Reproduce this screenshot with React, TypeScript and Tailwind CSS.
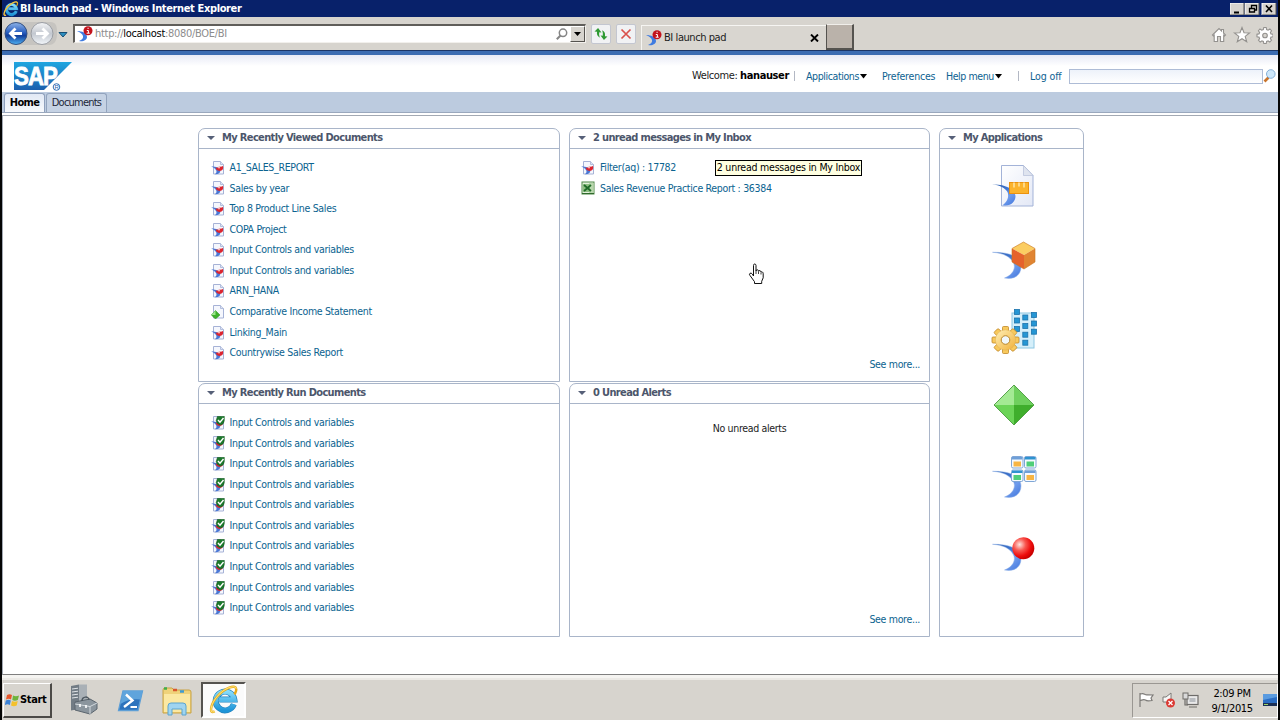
import React from 'react';
import { clsx } from 'clsx';

type DocKind = 'webi' | 'crystal' | 'excel' | 'done';

interface Doc {
  name: string;
  kind: DocKind;
}

const viewedDocs: Doc[] = [
  { name: 'A1_SALES_REPORT', kind: 'webi' },
  { name: 'Sales by year', kind: 'webi' },
  { name: 'Top 8 Product Line Sales', kind: 'webi' },
  { name: 'COPA Project', kind: 'webi' },
  { name: 'Input Controls and variables', kind: 'webi' },
  { name: 'Input Controls and variables', kind: 'webi' },
  { name: 'ARN_HANA', kind: 'webi' },
  { name: 'Comparative Income Statement', kind: 'crystal' },
  { name: 'Linking_Main', kind: 'webi' },
  { name: 'Countrywise Sales Report', kind: 'webi' },
];

const runDocs: Doc[] = Array.from({ length: 10 }, () => ({
  name: 'Input Controls and variables',
  kind: 'done',
}));

const inboxDocs: Doc[] = [
  { name: 'Filter(aq) : 17782', kind: 'webi' },
  { name: 'Sales Revenue Practice Report : 36384', kind: 'excel' },
];

const Gradients = () => (
  <svg className="absolute" width="0" height="0">
    <defs>
      <linearGradient id="swoosh" x1="0" y1="0" x2="1" y2="1">
        <stop offset="0" stopColor="#2457a8" />
        <stop offset="0.4" stopColor="#3f74cf" />
        <stop offset="0.65" stopColor="#6f9cec" />
        <stop offset="1" stopColor="#3f74dc" />
      </linearGradient>
      <radialGradient id="ball" cx="0.33" cy="0.33" r="0.7">
        <stop offset="0" stopColor="#ffe3de" />
        <stop offset="0.4" stopColor="#f8564f" />
        <stop offset="0.75" stopColor="#ee0c0c" />
        <stop offset="1" stopColor="#c80000" />
      </radialGradient>
      <linearGradient id="gold" x1="0" y1="0" x2="1" y2="1">
        <stop offset="0" stopColor="#fff0b8" />
        <stop offset="1" stopColor="#f0b038" />
      </linearGradient>
      <linearGradient id="page" x1="0" y1="0" x2="1" y2="1">
        <stop offset="0" stopColor="#ffffff" />
        <stop offset="1" stopColor="#e3e8f6" />
      </linearGradient>
      <linearGradient id="sap" x1="0" y1="0" x2="0" y2="1">
        <stop offset="0" stopColor="#1fa6e0" />
        <stop offset="1" stopColor="#1b5fae" />
      </linearGradient>
      <linearGradient id="blueBtn" x1="0" y1="0" x2="0" y2="1">
        <stop offset="0" stopColor="#8fb4e8" />
        <stop offset="0.45" stopColor="#2a5fc0" />
        <stop offset="0.6" stopColor="#123f9c" />
        <stop offset="1" stopColor="#4fb2f4" />
      </linearGradient>
      <linearGradient id="greyBtn" x1="0" y1="0" x2="0" y2="1">
        <stop offset="0" stopColor="#f4f5f7" />
        <stop offset="0.5" stopColor="#c3c8d0" />
        <stop offset="1" stopColor="#f2f6fa" />
      </linearGradient>
      <linearGradient id="ie" x1="0" y1="0" x2="0" y2="1">
        <stop offset="0" stopColor="#86dcfb" />
        <stop offset="1" stopColor="#1e95d8" />
      </linearGradient>
    </defs>
  </svg>
);

const IeIcon = ({ className }: { className?: string }) => (
  <svg className={className} viewBox="0 0 32 32" fill="none">
    <path d="M26.5 20.5A10 10 0 1 1 27 15.5H11" stroke="#2483bd" strokeWidth="6.4" />
    <path d="M26.5 20.5A10 10 0 1 1 27 15.5H11" stroke="url(#ie)" strokeWidth="5" />
    <path d="M6 28C0 32 1 21 9 12 17 3 28-1 29 4c.4 1.6-.6 4-1.8 6" stroke="#e5a91b" strokeWidth="2.6" />
    <path d="M6 28C0 32 1 21 9 12 17 3 28-1 29 4" stroke="#ffe272" strokeWidth="1.2" />
  </svg>
);

const BiIcon = () => (
  <svg className="shrink-0" width="16" height="16" viewBox="0 0 16 16">
    <path d="M0 5C5 5 10 7 10 11c0 3-4 5-8 4 3-1 4.500-3 4-5C5.500 8 3 6 0 5z" fill="#3f7be0" />
    <circle cx="11" cy="4.700" r="4.500" fill="#c3121b" />
    <path d="M9.800 4.500h1.600V7M9.700 7.200h3M10.500 2.300h1.200" stroke="#fff" strokeWidth="1" fill="none" />
  </svg>
);

const DocIcon = ({ kind }: { kind: DocKind }) => {
  if (kind === 'excel') {
    return (
      <svg className="shrink-0" width="14" height="14" viewBox="0 0 14 14">
        <rect x="1" y="1" width="12" height="12" fill="#e3f0dc" stroke="#4f8746" />
        <path d="M8 2h4.500v10H8z" fill="#b8d7ac" />
        <path d="M2 3h7v8H2z" fill="#8fbf83" />
        <path d="M3 4l7 6M10 4l-7 6" stroke="#1f6a28" strokeWidth="1.800" />
        <path d="M1 12.500h12" stroke="#2f6a2c" />
      </svg>
    );
  }
  return (
    <svg className="shrink-0" width="14" height="14" viewBox="0 0 14 14">
      <path d="M2.500.5h7l3 3v9.500h-10z" fill="#f5f7fd" stroke="#a6b2d6" />
      <path d="M9.500.5v3h3" fill="#dde3f3" stroke="#a6b2d6" strokeWidth=".8" />
      {kind === 'crystal' ? (
        <g>
          <path d="M4.500 5.500L9 10l-4.500 4L.3 10z" fill="#3db12b" stroke="#2a8a1e" strokeWidth=".5" />
          <path d="M4.500 5.500V10H.3z" fill="#9be58c" />
        </g>
      ) : (
        <g>
          <path d="M.2 5.300C5 5.500 9.500 7 9.300 10c0 2-2 3.500-5.300 3.300C5.500 12 6 10.500 5 9 4 7.500 2.500 6.500.2 5.300z" fill="#4a78d6" />
          <path d="M4.500 6.500Q5 9 7.500 9.800q3 .5 4.200-1.200.8-1.600.3-3.600-2 1-3 .5-2 1.500-4.500 1z" fill="#dc2530" />
          <circle cx="8" cy="6.500" r="1.100" fill="#f9b5b0" />
        </g>
      )}
      {kind === 'done' && (
        <g>
          <path d="M6.500.2h6.800v4q0 4-3.800 4.800Q5.500 8 5.200 4.500z" fill="#1c7a2c" stroke="#14501e" strokeWidth=".5" />
          <path d="M7 4l2 2.200L12.500 2" stroke="#fff" strokeWidth="1.400" fill="none" />
        </g>
      )}
    </svg>
  );
};

const DocRow = ({ doc }: { doc: Doc }) => (
  <li className="flex h-[20.6px] items-center gap-[5px]">
    <DocIcon kind={doc.kind} />
    <a className="text-[#0b6390]">{doc.name}</a>
  </li>
);

interface PanelProps {
  title: string;
  className?: string;
  children?: React.ReactNode;
}

const Panel: React.FC<PanelProps> = ({ title, className, children }) => (
  <section className={clsx('flex flex-col rounded-t-[7px] border border-[#a9b5c9] bg-white', className)}>
    <h2 className="flex h-[19.5px] shrink-0 items-center gap-[7px] border-b border-[#a9b5c9] pl-2 text-[11px] font-bold tracking-[-0.64px] text-[#4c566b]">
      <svg width="8" height="4" viewBox="0 0 8 4">
        <path d="M0 0h8L4 4z" fill="#566078" />
      </svg>
      {title}
    </h2>
    {children}
  </section>
);

const Swoosh = () => (
  <path
    d="M2.500 17.300C13 18 20 21.500 23 27 27 33 22 40.500 14.500 43c9 2 16.500-2.500 16.500-11C31 22 20 17 2.500 17.300z"
    fill="url(#swoosh)"
    stroke="#8fb0e6"
    strokeWidth=".5"
  />
);

const AppIcon = ({ children }: { children: React.ReactNode }) => (
  <svg className="mb-[25px] block" width="48" height="48" viewBox="0 0 48 48">
    {children}
  </svg>
);

const gridSquares = [
  [27, 4], [27, 12.5], [27, 21],
  [35.3, 9.5], [35.3, 18], [35.3, 26.7], [35.3, 34.7],
  [44, 7], [44, 15.5], [44, 23.7],
];

const tiles = [
  { x: 21.5, y: 2.5, bar: '#6f9fd8', fill: '#f7b544' },
  { x: 34.5, y: 2.5, bar: '#2f93d0', fill: '#4fce79' },
  { x: 21.5, y: 16, bar: '#2f93d0', fill: '#4fce79' },
  { x: 34.5, y: 16, bar: '#6f9fd8', fill: '#f7b544' },
];

const Applications = () => (
  <div className="flex flex-col items-center pt-[13.5px] pl-[5px]">
    <AppIcon>
      <path d="M11.500 3.500h22l9.500 10v30.500H11.500z" fill="url(#page)" stroke="#a3b3d8" />
      <path d="M33.500 3.500v10H43z" fill="#dfe4ef" stroke="#b4bfd8" strokeWidth=".7" />
      <path d="M2 22.500C10 23 15 26 17.500 30c2 5-.5 10-5 13.200C20 45 25.500 40 25.500 34 25 27 15 22 2 22.500z" fill="url(#swoosh)" />
      <rect x="19.500" y="20.500" width="19" height="11" fill="#fbb32d" stroke="#eb920f" />
      <path d="M24 20.500v5M29 20.500v4M34 20.500v5" stroke="#fff0c4" strokeWidth="1.200" />
    </AppIcon>
    <AppIcon>
      <Swoosh />
      <path d="M33.500 7L45 13.500 34 20l-12-6.500z" fill="#fbcd62" />
      <path d="M22 13.500L34 20v14l-12-7z" fill="#e5622c" />
      <path d="M45 13.500L34 20v14l11-7z" fill="#e08432" />
      <path d="M33.500 7L45 13.500V27l-11 7-12-7V13.500z" fill="none" stroke="#c8751f" strokeWidth=".6" />
    </AppIcon>
    <AppIcon>
      <rect x="22" y="5" width="22" height="35" fill="#d5effa" stroke="#8cc6e2" />
      {gridSquares.map(([x, y]) => (
        <rect key={`${x}-${y}`} x={x - 2.5} y={y - 2.5} width="5" height="5" fill="#2596d4" stroke="#1c73ac" strokeWidth=".8" />
      ))}
      {[0, 45, 90, 135].map((angle) => (
        <rect
          key={angle}
          x="12.500"
          y="18.500"
          width="6"
          height="27"
          rx="1"
          fill="#f8c95c"
          stroke="#c0882a"
          strokeWidth=".8"
          transform={`rotate(${angle} 15.5 32)`}
        />
      ))}
      <circle cx="15.500" cy="32" r="10.200" fill="url(#gold)" stroke="#dcae50" strokeWidth=".5" />
      <circle cx="15.500" cy="32" r="4.300" fill="#f1f8fb" stroke="#b9872d" />
    </AppIcon>
    <AppIcon>
      <path d="M24 4v20H4z" fill="#a4ea94" />
      <path d="M24 4l20 20H24z" fill="#6fd05e" />
      <path d="M4 24h20v20z" fill="#6bd457" />
      <path d="M44 24H24v20z" fill="#3fae2c" />
      <path d="M24 4l20 20-20 20L4 24z" fill="none" stroke="#4b9a40" strokeWidth=".9" />
    </AppIcon>
    <AppIcon>
      <Swoosh />
      {tiles.map((tile) => (
        <g key={`${tile.x}-${tile.y}`}>
          <rect x={tile.x} y={tile.y} width="11.500" height="11.500" rx="1.500" fill="#f6faff" stroke="#7fa6d6" />
          <rect x={tile.x + 0.5} y={tile.y + 0.5} width="10.500" height="2.500" fill={tile.bar} />
          <rect x={tile.x + 2} y={tile.y + 5} width="7.500" height="5" fill={tile.fill} />
        </g>
      ))}
    </AppIcon>
    <AppIcon>
      <Swoosh />
      <circle cx="33.300" cy="21.300" r="11" fill="url(#ball)" />
    </AppIcon>
  </div>
);

const TitleBar = () => (
  <header className="flex h-[17px] items-center bg-[#08216a] pl-[1px] text-white">
    <IeIcon className="mr-[1px] h-4 w-4" />
    <h1 className="grow pt-[1px] text-[11px] font-bold tracking-[-0.37px]">BI launch pad - Windows Internet Explorer</h1>
    <svg className="mr-[1px]" width="47" height="12" viewBox="0 0 47 12">
      <path d="M0 0h14v12H0zM15 0h14v12H15zM32 0h14v12H32z" fill="#d6d3ce" />
      <path d="M0 12V0h14M15 12V0h14M32 12V0h14" fill="none" stroke="#fff" />
      <path d="M14 0v12H0M29 0v12H15M46 0v12H32" fill="none" stroke="#55534f" />
      <path d="M4 9.500h5" stroke="#000" strokeWidth="2" />
      <path d="M21.500 5V2.500h5V7H25M19.500 5.500h5V9h-5z" fill="none" stroke="#000" strokeWidth="1.300" />
      <path d="M36 2.500l6 6.500M42 2.500L36 9" stroke="#000" strokeWidth="1.600" />
    </svg>
  </header>
);

const Toolbar = () => (
  <nav className="flex h-[33px] items-center bg-[#d7d4ce]">
    <svg width="70" height="32" viewBox="0 0 70 32">
      <path d="M14 4h34c7 0 7 5 7 12s-3 11-8 11H14z" fill="#c6c4c0" />
      <circle cx="14" cy="15.500" r="11" fill="url(#blueBtn)" stroke="#35507f" />
      <path d="M20 15.500H9M13.500 10.500l-5 5 5 5" stroke="#fff" strokeWidth="2.800" fill="none" />
      <circle cx="40" cy="15.500" r="11" fill="url(#greyBtn)" stroke="#9a9da3" />
      <path d="M34 15.500h11M40.500 10.500l5 5-5 5" stroke="#fff" strokeWidth="2.800" fill="none" />
      <path d="M57 14.500h8l-4 4.500z" fill="#2d8fc0" stroke="#174e74" />
    </svg>
    <div className="ml-[1px] flex h-[19px] w-[513px] items-center border-2 border-r border-b border-[#605e5a] border-r-[#f2f0ec] border-b-[#f2f0ec] bg-white pl-[2px]">
      <BiIcon />
      <p className="ml-[2px] grow pt-[1px] text-[11px] tracking-[-0.3px] text-[#8d8d8d]">
        http://<span className="text-black">localhost</span>:8080/BOE/BI
      </p>
      <svg className="mr-[2px]" width="12" height="12" viewBox="0 0 12 12">
        <circle cx="7" cy="4.800" r="3.700" fill="none" stroke="#858585" strokeWidth="1.500" />
        <path d="M4.500 7.500L.8 11.300" stroke="#858585" strokeWidth="2" />
      </svg>
      <span className="flex h-4 w-[15px] items-center justify-center border border-white border-r-[#55534f] border-b-[#55534f] bg-[#d7d4ce]">
        <svg width="7" height="4" viewBox="0 0 7 4">
          <path d="M0 0h7L3.500 4z" />
        </svg>
      </span>
    </div>
    <span className="ml-[5px] flex h-5 w-5 items-center justify-center rounded-[2px] border border-[#c3c6d0] bg-[#f1f2f4]">
      <svg width="14" height="14" viewBox="0 0 14 14" fill="#2f9a33">
        <path d="M3.500 1L.5 5H3c0 3 1 4.500 3.800 5.300C5.500 8.500 5.300 7 5.300 5H7.500z" transform="rotate(8 4 5)" />
        <path d="M10.500 13l3-4H11c0-3-1-4.500-3.800-5.300C8.500 5.500 8.700 7 8.700 9H6.500z" transform="rotate(8 10 9)" />
      </svg>
    </span>
    <span className="ml-[5px] flex h-5 w-5 items-center justify-center rounded-[2px] border border-[#c3c6d0] bg-[#f1f2f4]">
      <svg width="12" height="12" viewBox="0 0 12 12">
        <path d="M1.500 1.500l9 9M10.500 1.500l-9 9" stroke="#d9514c" strokeWidth="1.700" />
      </svg>
    </span>
    <div className="mt-[8px] ml-[5px] flex h-[25px] w-[185px] items-center border-t border-l border-[#f6f5f2] bg-[#d9d6d0] pl-[4px]">
      <BiIcon />
      <span className="ml-[2px] grow pt-[1px] text-[11px] tracking-[-0.43px] text-[#1c1c1c]">BI launch pad</span>
      <svg className="mr-[7px]" width="9" height="8" viewBox="0 0 9 8">
        <path d="M1 .5l7 7M8 .5l-7 7" stroke="#000" strokeWidth="1.900" />
      </svg>
    </div>
    <span className="mt-[7px] h-[26px] w-[28px] border border-r-2 border-b-2 border-[#55534f] border-t-[#f0eeea] bg-[#bab2aa]" />
    <svg className="mt-[2px] ml-auto mr-[5px]" width="62" height="18" viewBox="0 0 62 18" fill="#fff" stroke="#93918e" strokeWidth="1.100">
      <path d="M1.500 9L8 2.500 10.500 5V3.500h2V7l2 2-1 1-.8-.7v6.200H9.500V10.500h-3v5H3.200V9.300l-.8.700z" />
      <path d="M31 1.500l2 5.300 5.500.1-4.300 3.500 1.500 5.400L31 12.700l-4.700 3.100 1.500-5.400-4.300-3.500 5.500-.1z" />
      <path d="M52.800 1.500h2.400l.4 2 1.500.7 1.800-1.200 1.600 1.700-1.100 1.800.6 1.400 2 .4v2.400l-2 .4-.6 1.500 1.100 1.700-1.700 1.700-1.700-1.100-1.500.6-.4 2h-2.400l-.4-2-1.500-.6-1.700 1.100-1.700-1.700 1.100-1.700-.6-1.500-2-.4V8.300l2-.4.6-1.400-1.100-1.800L49 3l1.700 1.200 1.600-.7z" />
      <circle cx="54" cy="9.500" r="2.300" fill="#d7d4ce" />
    </svg>
  </nav>
);

const Caret = () => (
  <svg className="ml-[1px]" width="7" height="5" viewBox="0 0 7 5">
    <path d="M0 0h7L3.500 4.500z" />
  </svg>
);

const Banner = () => (
  <div className="flex h-[37px] items-center bg-linear-to-b from-[#e8eaf6] via-white via-30% to-white pt-[5px] tracking-[-0.4px] text-[#0d6291]">
    <svg className="ml-[11px]" width="60" height="30" viewBox="0 0 60 30">
      <path d="M1 1h58L31 29H1z" fill="url(#sap)" />
      <text x="1" y="23.500" fontSize="25" fontWeight="bold" fill="#fff" stroke="#fff" strokeWidth=".8" textLength="43" lengthAdjust="spacingAndGlyphs" letterSpacing="-1" fontFamily="Liberation Sans, sans-serif">SAP</text>
      <circle cx="43.500" cy="26" r="3.300" fill="#fff" stroke="#1b5fae" strokeWidth=".9" />
      <text x="41.600" y="28.200" fontSize="6" fill="#1b5fae" fontFamily="Liberation Sans, sans-serif">R</text>
    </svg>
    <p className="ml-[619px] w-[102px] text-[11px] tracking-[-0.4px] text-[#1b1b1b]">
      Welcome: <b className="text-black">hanauser</b>
    </p>
    <span className="h-[10px] w-px bg-[#b3b8c4]" />
    <a className="ml-[11px] flex w-[76px] items-center pt-[1px]">Applications<Caret /></a>
    <a className="w-[64px] pt-[1px] tracking-[-0.2px]">Preferences</a>
    <a className="flex w-[72px] items-center pt-[1px]">Help menu<Caret /></a>
    <span className="h-[10px] w-px bg-[#b3b8c4]" />
    <a className="ml-[11px] w-[39px] pt-[1px] tracking-[-0.1px]">Log off</a>
    <span className="h-[15px] w-[194px] border border-[#aebcd6] bg-linear-to-b from-[#edf2fa] to-white" />
    <svg width="13" height="14" viewBox="0 0 13 14">
      <path d="M5.500 8.500L1.500 12.500" stroke="#c9742b" strokeWidth="2.600" />
      <circle cx="7.800" cy="5" r="4.300" fill="#cde7fa" stroke="#85b0d8" />
    </svg>
  </div>
);

const Tabs = () => (
  <div className="flex h-[20px] items-end bg-[#bccbdf] pl-[2px] text-[11px]">
    <span className="flex h-[19px] w-[41px] items-center justify-center rounded-t-[3px] border border-b-0 border-[#8fa0bc] bg-linear-to-b from-[#e2e9f5] to-[#f7f9fc] pt-[1px] font-bold tracking-[-0.7px] text-black">
      Home
    </span>
    <span className="ml-[1px] flex h-[19px] w-[61px] items-center justify-center rounded-t-[3px] border border-b-0 border-[#92a3bd] bg-[#c5d2e4] pt-[1px] tracking-[-0.77px] text-[#1d2738]">
      Documents
    </span>
  </div>
);

const Taskbar = () => (
  <footer className="flex h-[42px] items-center border-t-2 border-[#eceae6] bg-[#d7d4ce] text-black">
    <button className="ml-[1px] flex h-[35px] w-[49px] items-center border border-r-2 border-b-2 border-white border-r-[#4c4a47] border-b-[#4c4a47] pl-[1px] text-[11px] font-bold tracking-[-0.35px]">
      <svg className="shrink-0" width="15" height="14" viewBox="0 0 15 14">
        <path d="M2 2c2-1.300 3.500-1 5 0L6 6.500c-1.500-1-3-1-5 0z" fill="#e8562a" />
        <path d="M8 2.500c2 1 3.800 1 6 0L12.800 7c-2 1-3.800 1-5.500 0z" fill="#6db33c" />
        <path d="M.8 7.500c2-1 3.500-1 5 0l-1 4.500c-1.500-1-3-1-5 0z" fill="#3c82d6" />
        <path d="M7 8c2 1 3.800 1 5.700 0l-1 4.500c-2 1-3.800 1-5.700 0z" fill="#f4c12c" />
      </svg>
      <span className="pt-[2px]">Start</span>
    </button>
    <svg className="ml-[17px]" width="30" height="32" viewBox="0 0 30 32">
      <path d="M2 2l8-1.500V25l-8 1.500z" fill="#727c85" />
      <path d="M10 .5h8V20l-8 5z" fill="#a9b0b6" />
      <path d="M3 5l6-.8M3 8l6-.8M3 11l6-.8M3 14l6-.8" stroke="#e1e5e8" />
      <path d="M6 18l15-3 7 4v6l-7 5-15-4z" fill="#8b959d" stroke="#5b656e" />
      <path d="M6 20l15 2.500 7-3.500M21 22.500V30" fill="none" stroke="#d3d9dd" />
      <path d="M13 17c0-5 7-5 7-1" fill="none" stroke="#4e5860" strokeWidth="1.500" />
      <path d="M11 20v3M17 21v3" stroke="#fff" strokeWidth="1.600" />
    </svg>
    <svg className="mt-[1px] ml-[18px]" width="27" height="24" viewBox="0 0 27 24">
      <path d="M6 2h19.500L21 21.500H1.500z" fill="#2d73bd" stroke="#5e9fd6" strokeWidth="1.300" />
      <path d="M6 2h19.500l-2 8.500Q12 9 3.500 15z" fill="#5fa4dc" />
      <path d="M9 5.500l6.500 6L7 18" fill="none" stroke="#fff" strokeWidth="2.400" />
      <path d="M13.500 18H20" stroke="#fff" strokeWidth="2" />
    </svg>
    <svg className="mt-[2px] ml-[17px]" width="32" height="30" viewBox="0 0 32 30">
      <path d="M2 4q0-2 2-2h7l2 2h15q2 0 2 2v21H2z" fill="#efd27a" stroke="#c8a345" />
      <path d="M3 8h26v18H3z" fill="#fbe8a2" />
      <path d="M3 2.500h3" stroke="#3fae4a" strokeWidth="2.500" />
      <path d="M12 4h4" stroke="#d9572c" strokeWidth="2.500" />
      <path d="M19 5.500h4" stroke="#3f9bd2" strokeWidth="2.500" />
      <path d="M7 29v-9q0-3 3-3h12q3 0 3 3v9h-4v-6H11v6z" fill="#9fd4f0" stroke="#5aa4cf" />
    </svg>
    <span className="ml-[8px] flex h-[36px] w-[45px] items-center justify-center border-2 border-[#55534f] border-r-white border-b-white bg-[#fbfbfb]">
      <IeIcon className="h-[30px] w-[30px]" />
    </span>
    <div className="ml-auto flex h-[35px] w-[146px] items-center border border-[#9a9792] border-r-white border-b-white">
      <svg className="ml-[5px]" width="62" height="18" viewBox="0 0 62 18">
        <path d="M2 2v14M2.500 3c4-1.500 4 1.500 7 .8l5.500.2-2 3 1 2.500c-4 .5-5 1-6.500-.5-2-.8-3.500 0-5 .3" fill="#fff" stroke="#7c7a77" strokeWidth="1.200" />
        <path d="M25 6h3l5-4v13l-5-4h-3z" fill="#f7f7f7" stroke="#7c7a77" />
        <circle cx="32.500" cy="12" r="4.500" fill="#db3a34" />
        <path d="M30.500 10l4 4M34.500 10l-4 4" stroke="#fff" strokeWidth="1.300" />
        <rect x="49" y="4.500" width="11" height="9" fill="#e9e9e9" stroke="#6e6c69" strokeWidth="1.200" />
        <rect x="51.500" y="7" width="6" height="4" fill="#b9bcc0" />
        <path d="M51 16h8M47 8v6h3" stroke="#6e6c69" strokeWidth="1.200" fill="none" />
        <rect x="45" y="2" width="5" height="6" fill="#d9d9d9" stroke="#6e6c69" />
      </svg>
      <p className="ml-[4px] w-[56px] pt-[1px] text-center text-[11px] leading-[15px] tracking-[-0.4px]">
        2:09 PM
        <br />
        9/1/2015
      </p>
      <svg className="ml-auto" width="14" height="12" viewBox="0 0 14 12">
        <path d="M0 0h14v9H0z" fill="#2b6dc3" />
        <path d="M0 0h14v3L0 6z" fill="#5a9be0" />
        <path d="M0 9h14v3H0z" fill="#1c2f55" />
        <path d="M1 10.500h4" stroke="#9bd36b" />
      </svg>
    </div>
  </footer>
);

const App: React.FC = () => (
  <div className="flex h-[720px] w-[1280px] flex-col overflow-hidden border-r-2 border-l-2 border-[#050505] bg-white font-['DejaVu_Sans_Condensed','DejaVu_Sans',sans-serif] text-[10.5px] tracking-[-0.32px] whitespace-nowrap">
    <Gradients />
    <TitleBar />
    <Toolbar />
    <div className="h-[5px] shrink-0 border-t border-[#1b3566] bg-[#3c6cb2]" />
    <Banner />
    <Tabs />
    <main className="flex grow flex-col border-t border-[#9aa8bd] pt-[2px]">
      <div className="flex grow items-start justify-start gap-[9px] border-t border-b border-l border-[#a3a9b3] border-b-[#7f7f7f] pt-[12px] pl-[195px]">
        <div className="flex w-[362px] flex-col gap-[1px]">
          <Panel title="My Recently Viewed Documents" className="h-[254px]">
            <ul className="pt-[9px] pl-[11.5px]">
              {viewedDocs.map((doc, i) => (
                <DocRow key={i} doc={doc} />
              ))}
            </ul>
          </Panel>
          <Panel title="My Recently Run Documents" className="h-[254px]">
            <ul className="pt-[9px] pl-[11.5px]">
              {runDocs.map((doc, i) => (
                <DocRow key={i} doc={doc} />
              ))}
            </ul>
          </Panel>
        </div>
        <div className="flex w-[361px] flex-col gap-[1px]">
          <Panel title="2 unread messages in My Inbox" className="relative h-[254px]">
            <ul className="grow pt-[9px] pl-[11px]">
              {inboxDocs.map((doc) => (
                <DocRow key={doc.name} doc={doc} />
              ))}
            </ul>
            <a className="pr-[9px] pb-[8px] text-right text-[#0b6390]">See more...</a>
            <div className="absolute top-[31px] left-[145px] flex h-[16px] w-[147px] items-center justify-center border border-black bg-[#ffffe1] tracking-[-0.22px] text-black">
              2 unread messages in My Inbox
            </div>
            <svg className="absolute top-[134px] left-[178px]" width="17" height="22" viewBox="0 0 17 22">
              <path
                d="M5.500 13V2.500q0-1.500 1.200-1.500T8 2.500V8q.2-1.500 1.500-1.200 1 .2 1 1.500.4-1 1.500-.6 1 .3 1 1.500.5-.7 1.400-.2.800.5.800 1.800v4l-1.500 3.500v2.200H6.500v-1.800L2 12.500Q.8 11 2 10.300t2.300.8z"
                fill="#fff"
                stroke="#111"
              />
              <path d="M8 8v3M10.500 8.500V11M13 9.500v2" stroke="#111" strokeWidth=".8" />
            </svg>
          </Panel>
          <Panel title="0 Unread Alerts" className="h-[254px]">
            <p className="grow pt-[17.5px] text-center text-[#1c1c1c]">No unread alerts</p>
            <a className="pr-[9px] pb-[8px] text-right text-[#0b6390]">See more...</a>
          </Panel>
        </div>
        <Panel title="My Applications" className="h-[509px] w-[145px]">
          <Applications />
        </Panel>
      </div>
      <div className="h-[3px] bg-[#f5f4f1]" />
    </main>
    <Taskbar />
  </div>
);

export default App;
